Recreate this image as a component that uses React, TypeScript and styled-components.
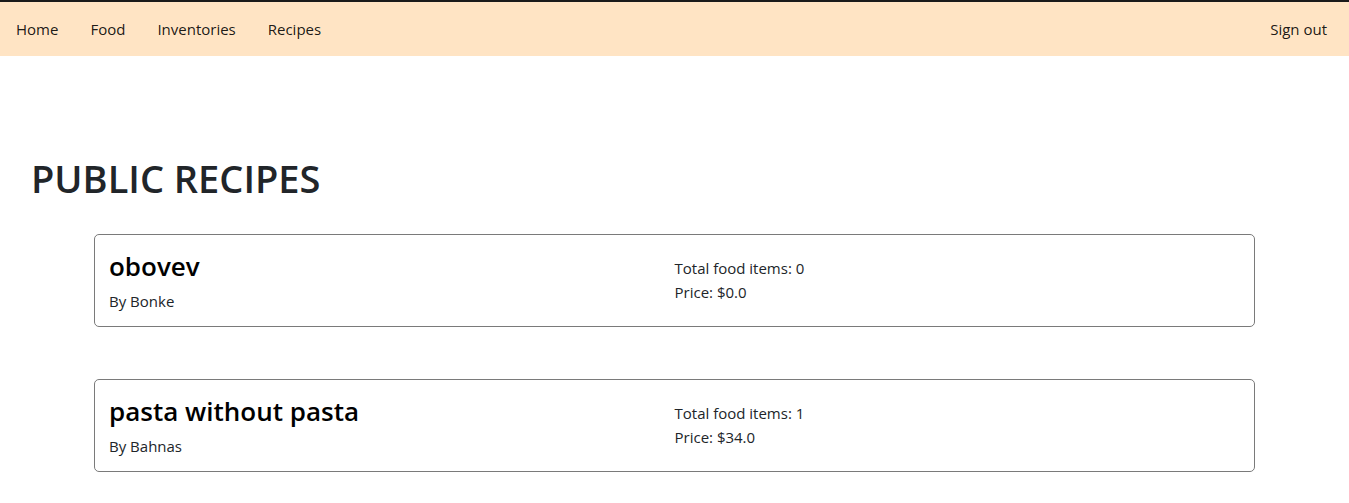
import styled, { createGlobalStyle } from "styled-components";

const GlobalStyle = createGlobalStyle`
  html, body {
    margin: 0;
    padding: 0;
    background: #fff;
  }
  body {
    font-family: "Open Sans", "Noto Sans", sans-serif;
    font-size: 15px;
    color: #212529;
  }
  * {
    box-sizing: border-box;
  }
`;

const Page = styled.div`
  border-top: 2px solid #1a1a1a;
`;

const NavBar = styled.nav`
  display: flex;
  align-items: center;
  justify-content: space-between;
  height: 54px;
  background: bisque;
  padding: 0 6px 0 0;
`;

const NavGroup = styled.div`
  display: flex;
  align-items: center;
`;

const NavLink = styled.a`
  padding: 0 16px;
  font-size: 15px;
  color: rgba(0, 0, 0, 0.9);
  text-decoration: none;
  cursor: pointer;
`;

const Main = styled.main`
  padding: 98px 0 0 31px;
`;

const PageTitle = styled.h1`
  margin: 0 0 32px;
  font-size: 38px;
  font-weight: 600;
  line-height: 48px;
  color: #212529;
`;

const CardList = styled.div`
  display: flex;
  flex-direction: column;
  gap: 52px;
  margin: 0 94px 0 63px;
`;

const Card = styled.div`
  display: grid;
  grid-template-columns: 1fr 1fr;
  border: 1px solid #7a7a7a;
  border-radius: 5px;
  padding: 12px 14px;
  min-height: 93px;
`;

const Name = styled.h3`
  margin: 0 0 4px;
  font-size: 26px;
  font-weight: 600;
  line-height: 38px;
  color: #000;
`;

const Author = styled.div`
  font-size: 15px;
  line-height: 24px;
`;

const Stats = styled.div`
  padding-top: 9px;
  font-size: 15px;
  line-height: 24px;
`;

const recipes = [
  { name: "obovev", author: "Bonke", items: 0, price: "0.0" },
  { name: "pasta without pasta", author: "Bahnas", items: 1, price: "34.0" },
];

export default function App() {
  return (
    <Page>
      <GlobalStyle />
      <NavBar>
        <NavGroup>
          <NavLink>Home</NavLink>
          <NavLink>Food</NavLink>
          <NavLink>Inventories</NavLink>
          <NavLink>Recipes</NavLink>
        </NavGroup>
        <NavLink>Sign out</NavLink>
      </NavBar>
      <Main>
        <PageTitle>PUBLIC RECIPES</PageTitle>
        <CardList>
          {recipes.map((r) => (
            <Card key={r.name}>
              <div>
                <Name>{r.name}</Name>
                <Author>By {r.author}</Author>
              </div>
              <Stats>
                <div>Total food items: {r.items}</div>
                <div>Price: ${r.price}</div>
              </Stats>
            </Card>
          ))}
        </CardList>
      </Main>
    </Page>
  );
}
